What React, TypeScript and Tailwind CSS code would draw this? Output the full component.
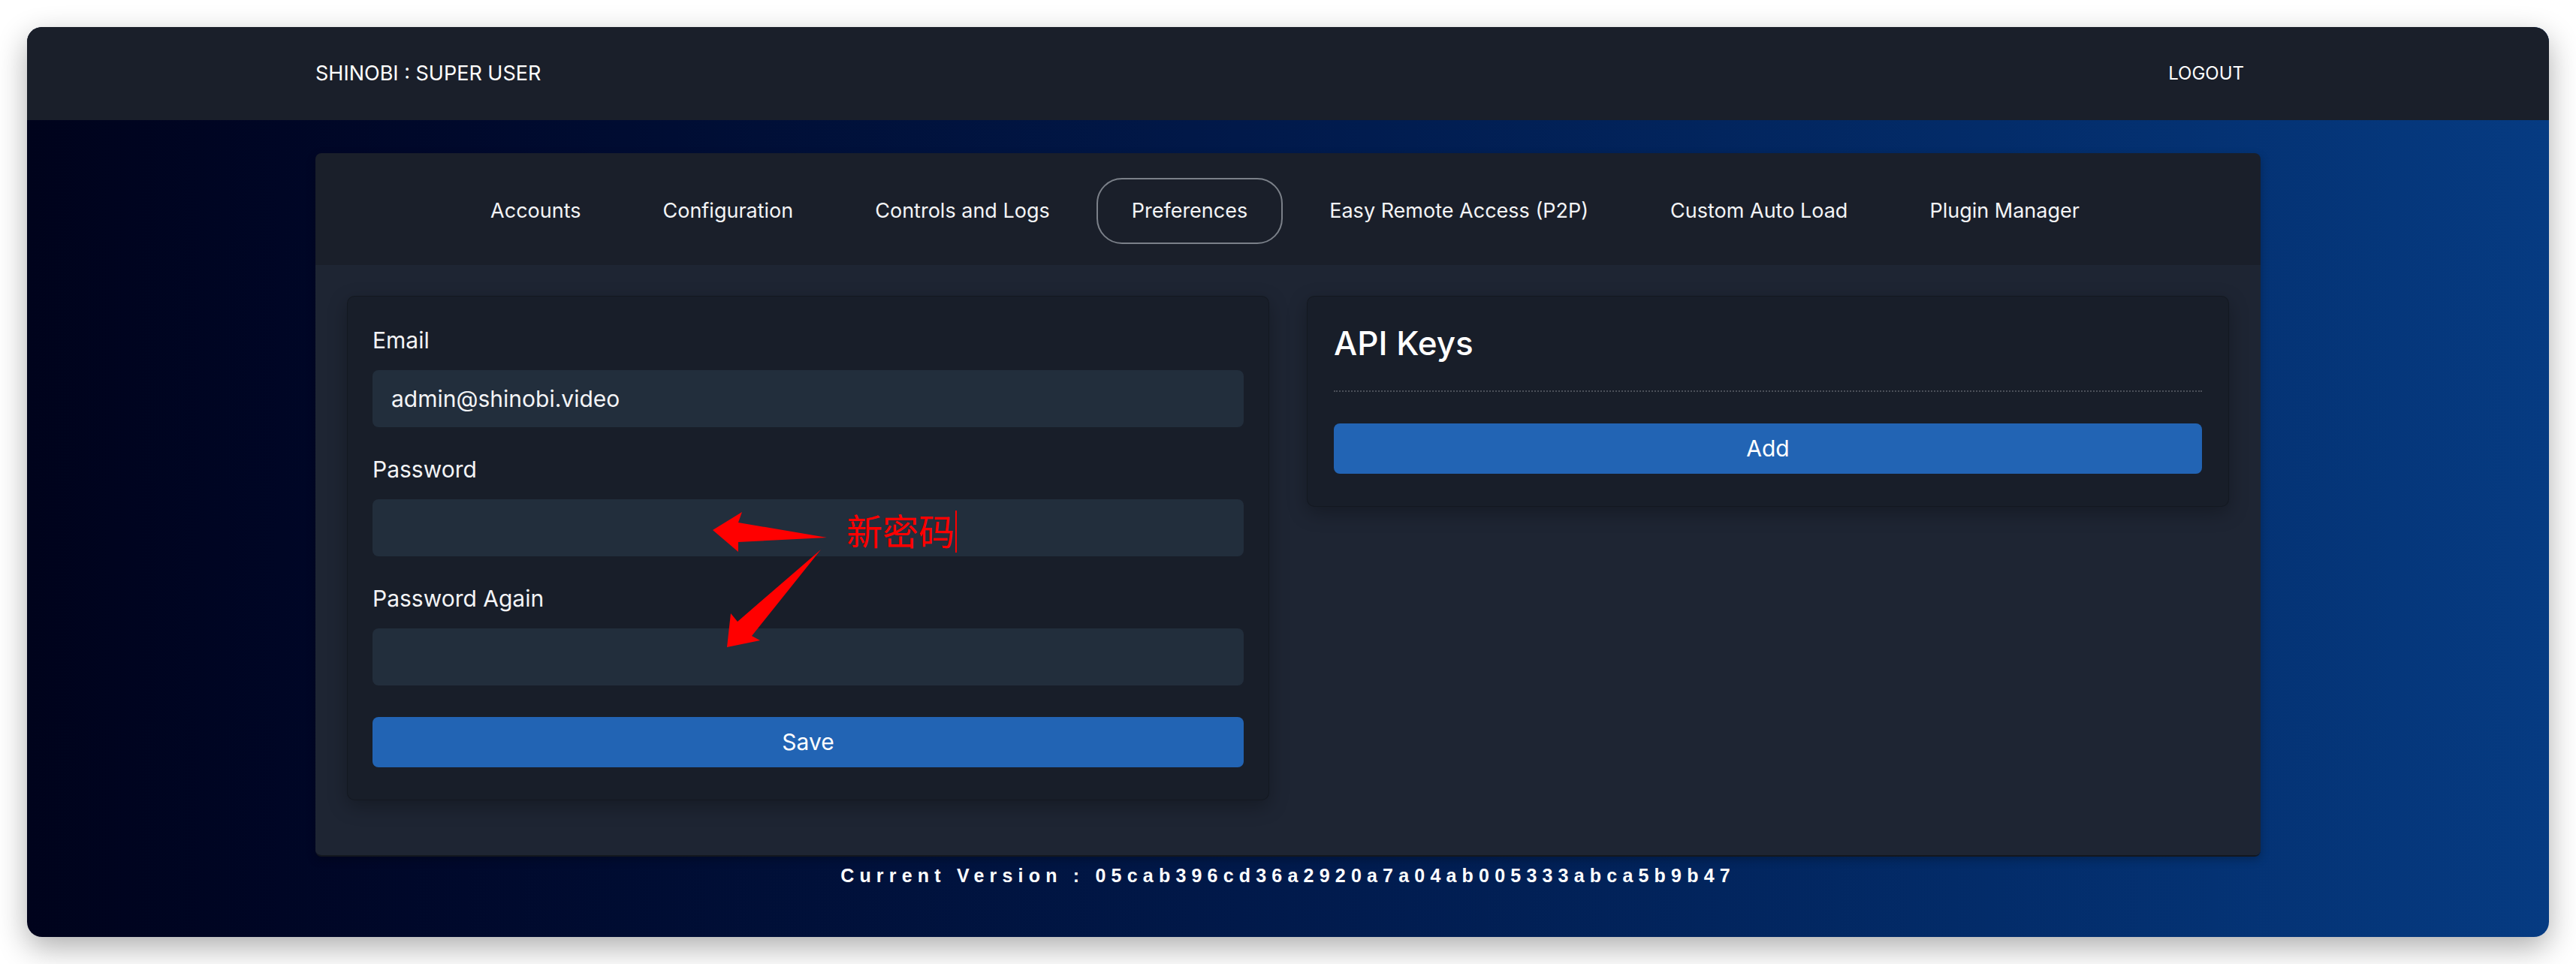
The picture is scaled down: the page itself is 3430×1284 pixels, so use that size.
import React from "react";

const tabs = [
  "Accounts",
  "Configuration",
  "Controls and Logs",
  "Preferences",
  "Easy Remote Access (P2P)",
  "Custom Auto Load",
  "Plugin Manager",
];

function Field({ label, value, last }: { label: string; value?: string; last?: boolean }) {
  return (
    <div className={last ? "" : "mb-[38px]"}>
      <div className="h-[36px] text-[30px] leading-[36px] text-[#f3f4f6]">{label}</div>
      <div className="mt-[22px] flex h-[76px] items-center rounded-[8px] bg-[#222e3c] px-[25px] text-[30px] text-[#f3f4f6]">
        {value}
      </div>
    </div>
  );
}

function Annotations() {
  return (
    <div className="pointer-events-none absolute left-0 top-0 h-[1284px] w-[3430px]">
      <svg width="3430" height="1284" viewBox="0 0 3430 1284" className="absolute left-0 top-0">
        <polygon points="949,706 988,682 983,696 1101,716 983,722 983,735" fill="#ff0000" />
        <polygon points="1093,732 1001,847 1012,853 968,862 973,817 982,828" fill="#ff0000" />
        <rect x="1272" y="680" width="2" height="56" fill="#ff0000" />
      </svg>
      <div className="absolute left-[1127px] top-[681px] whitespace-nowrap text-[48px] leading-none text-[#ff0000] font-['Noto_Sans_CJK_SC',sans-serif]">
        新密码
      </div>
    </div>
  );
}

export default function App() {
  return (
    <div className="relative h-[1284px] w-[3430px] bg-white p-[36px] font-['Inter',sans-serif]">
      <div className="flex h-full w-full flex-col overflow-hidden rounded-[20px] bg-linear-to-r from-[#00031c] via-[#011a4c] to-[#063b82] shadow-[0_14px_40px_rgba(0,0,0,0.32)]">
        <header className="flex h-[124px] shrink-0 items-center bg-[#1a1f2a]">
          <div className="mx-auto flex w-[2590px] items-center justify-between pr-[22px] text-white">
            <span className="text-[27px]">SHINOBI : SUPER USER</span>
            <span className="text-[24px]">LOGOUT</span>
          </div>
        </header>

        <main className="flex flex-col items-center pt-[44px]">
          <div className="w-[2590px] overflow-hidden rounded-[8px] border-b-2 border-[#13171e] shadow-[0_4px_12px_rgba(0,0,0,0.25)]">
            <nav className="flex h-[149px] items-start justify-center gap-[15px] bg-[#1a1f2a] pr-[8px] pt-[33px]">
              {tabs.map((t) => (
                <div
                  key={t}
                  className={
                    t === "Preferences"
                      ? "flex h-[88px] items-center rounded-[34px] border-2 border-[#7b8089] px-[45px] text-[27px] text-[#f3f4f6]"
                      : "flex h-[88px] items-center rounded-[34px] border-2 border-transparent px-[45px] text-[27px] text-[#f3f4f6]"
                  }
                >
                  {t}
                </div>
              ))}
            </nav>

            <section className="grid grid-cols-2 items-start gap-x-[50px] bg-[#1e2533] px-[42px] pb-[73px] pt-[41px]">
              <div className="rounded-[10px] border border-black/20 bg-[#181e29] px-[33px] pb-[43px] pt-[40px] shadow-[0_8px_26px_rgba(0,0,0,0.28)]">
                <Field label="Email" value="admin@shinobi.video" />
                <Field label="Password" />
                <Field label="Password Again" last />
                <div className="mt-[42px] flex h-[67px] items-center justify-center rounded-[8px] bg-[#2264b4] text-[30px] text-white">
                  Save
                </div>
              </div>

              <div className="rounded-[10px] border border-black/20 bg-[#181e29] px-[35px] pb-[43px] pt-[36px] shadow-[0_8px_26px_rgba(0,0,0,0.28)]">
                <h4 className="h-[52px] text-[44px] font-medium leading-[52px] text-white">API Keys</h4>
                <div className="mt-[37px] border-t-2 border-dotted border-[#4a4f58]" />
                <div className="mt-[42px] flex h-[67px] items-center justify-center rounded-[8px] bg-[#2264b4] text-[30px] text-white">
                  Add
                </div>
              </div>
            </section>
          </div>

          <p className="mt-[10px] text-center text-[25px] font-bold leading-[30px] tracking-[7.2px] text-white font-['Liberation_Sans',Arial,sans-serif]">
            Current Version : 05cab396cd36a2920a7a04ab005333abca5b9b47
          </p>
        </main>
      </div>
      <Annotations />
    </div>
  );
}
